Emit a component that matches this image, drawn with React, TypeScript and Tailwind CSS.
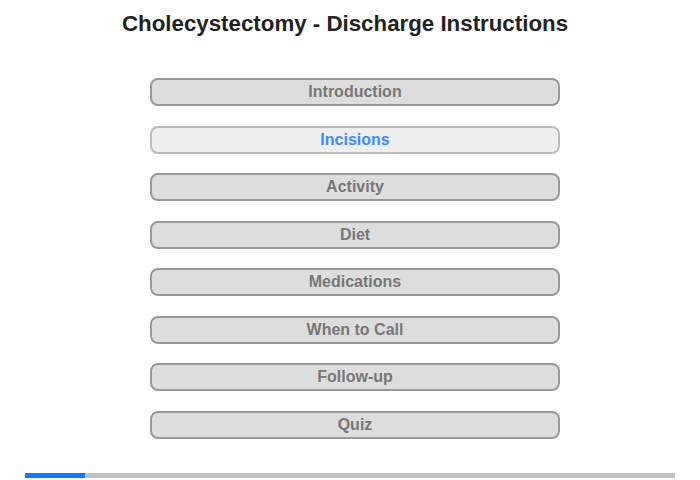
const sections = ['Introduction', 'Incisions', 'Activity', 'Diet', 'Medications', 'When to Call', 'Follow-up', 'Quiz']

export default function App() {
    const active = 'Incisions'
    const progress = 60 / 650

    return (
        <div className="w-[700px] h-[480px] bg-white font-['Liberation_Sans',Arial,sans-serif] flex flex-col">
            <h1 className="w-[690px] mt-[11px] text-center text-[22.3px] leading-[25px] font-bold text-[#222222]">
                Cholecystectomy - Discharge Instructions
            </h1>

            <div className="ml-[150px] mt-[42px] w-[410px] flex flex-col gap-[19.5px]">
                {sections.map((s) => (
                    <button
                        key={s}
                        className={
                            s === active
                                ? 'h-[28px] rounded-[8px] border-2 border-[#bbbbbb] bg-[#eeeeee] text-[#3b8bff] text-[16px] font-bold leading-[24px]'
                                : 'h-[28px] rounded-[8px] border-2 border-[#999999] bg-[#dddddd] text-[#777777] text-[16px] font-bold leading-[24px]'
                        }
                    >
                        {s}
                    </button>
                ))}
            </div>

            {/* progress */}
            <div className="ml-[25px] mt-[34px] w-[650px] h-[5px] bg-[#c0c0c0]">
                <div className="h-full bg-[#0a7cff]" style={{ width: `${progress * 100}%` }} />
            </div>
        </div>
    )
}
